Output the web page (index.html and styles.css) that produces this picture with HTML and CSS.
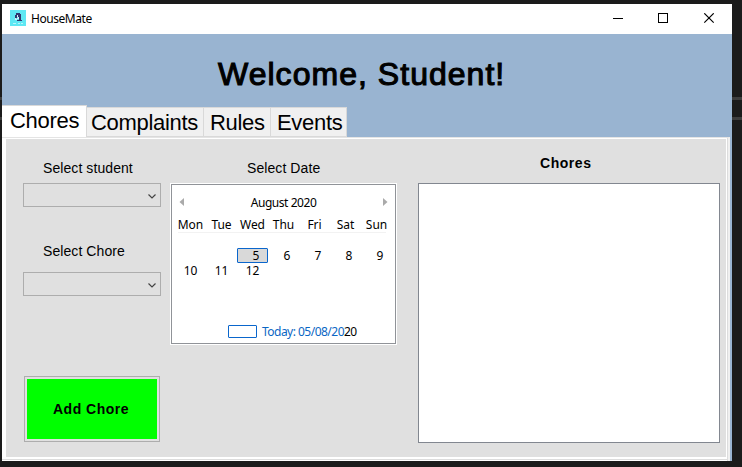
FILE: index.html
```html
<!DOCTYPE html>
<html lang="en">
<head>
<meta charset="utf-8">
<title>HouseMate</title>
<link rel="stylesheet" href="styles.css">
</head>
<body>
<div class="window">
  <header class="titlebar">
    <svg class="logo" width="16" height="16" viewBox="0 0 16 16" shape-rendering="crispEdges">
      <path fill="#5ee7f3" d="M0 0h16v16H0z"/>
      <path fill="#30366f" d="M6 3h4v1h1v6h1v1H7v-1h2V8H8V6H7v2H5V5h1z"/>
      <path fill="#d8edf8" d="M7 5h1v2h1v2H7V8h1zM5 8h1v1h1v1H5z"/>
      <path fill="#b9f6fa" d="M3 13h3v1H3zM8 13h2v1H8zM11 13h2v1h-2z"/>
    </svg>
    <span class="app-name">HouseMate</span>
    <svg class="controls" width="104" height="12" viewBox="0 0 104 12" fill="none" stroke="#000">
      <path d="M0 5.500h10M45.500.500h9v9h-9z" shape-rendering="crispEdges"/>
      <path d="M91.300.300l9.400 9.400M100.700.300l-9.400 9.400" stroke-width="1.150"/>
    </svg>
  </header>
  <section class="banner">
    <h1>Welcome, Student!</h1>
  </section>
  <nav class="tabs">
    <div class="tab active"><span>Chores</span></div>
    <div class="tab complaints"><span>Complaints</span></div>
    <div class="tab rules"><span>Rules</span></div>
    <div class="tab events"><span>Events</span></div>
  </nav>
  <div class="frame">
    <main class="panel">
      <section class="form">
        <label class="student-label">Select student</label>
        <div class="combo"><svg width="8" height="5" viewBox="0 0 8 5"><path d="M.5.500L4 4 7.500.500"/></svg></div>
        <label class="chore-label">Select Chore</label>
        <div class="combo"><svg width="8" height="5" viewBox="0 0 8 5"><path d="M.5.500L4 4 7.500.500"/></svg></div>
        <button class="add"><span>Add Chore</span></button>
      </section>
      <section class="date">
        <label class="date-label">Select Date</label>
        <div class="calendar">
          <div class="month">
            <svg width="5" height="8" viewBox="0 0 5 8"><path d="M5 0v8L.5 4z"/></svg>
            <span>August 2020</span>
            <svg width="5" height="8" viewBox="0 0 5 8"><path d="M0 0v8l4.500-4z"/></svg>
          </div>
          <div class="weekdays"><span>Mon</span><span>Tue</span><span>Wed</span><span>Thu</span><span>Fri</span><span>Sat</span><span>Sun</span></div>
          <div class="days">
            <span></span><span></span><span class="selected">5</span><span>6</span><span>7</span><span>8</span><span>9</span>
            <span>10</span><span>11</span><span>12</span>
          </div>
          <div class="today"><i></i><span>Today: 05/08/20<b>20</b></span></div>
        </div>
      </section>
      <section class="list">
        <h2>Chores</h2>
        <div class="listbox"></div>
      </section>
    </main>
  </div>
</div>
</body>
</html>
```
FILE: styles.css
```css
* { box-sizing: border-box; }
body {
  margin: 0;
  width: 742px;
  height: 467px;
  padding: 4px 10px 6px 2px;
  overflow: hidden;
  color: #000;
  font-family: "Liberation Sans", sans-serif;
  background:
    linear-gradient(#3d3d3d, #3d3d3d) 0 97px / 100% 3px no-repeat,
    linear-gradient(#3d3d3d, #3d3d3d) 0 117px / 100% 3px no-repeat,
    #1b1b1b;
}
.window { width: 730px; height: 457px; background: #99b4d1; }
.titlebar {
  display: flex;
  align-items: center;
  height: 30px;
  padding: 0 15px 0 8px;
  background: #fff;
}
.logo { margin-bottom: 2px; }
.app-name {
  margin-left: 5px;
  font: 12px/16px "Noto Sans", sans-serif;
  letter-spacing: -0.45px;
}
.controls { margin-left: auto; }
.banner { height: 71px; padding: 21px 0 0 216px; }
h1 {
  margin: 0;
  font-size: 32px;
  line-height: 38px;
  font-weight: normal;
  letter-spacing: 1.03px;
  -webkit-text-stroke: 1.1px #000;
  white-space: nowrap;
}
.tabs { display: flex; align-items: flex-end; height: 32px; }
.tab {
  height: 30px;
  border: 1px solid #d9d9d9;
  border-left: 0;
  background: #f0f0f0;
  font-size: 22px;
  line-height: 30px;
  letter-spacing: -0.3px;
  white-space: nowrap;
}
.tab.active {
  width: 85px;
  height: 32px;
  padding-left: 8px;
  border-bottom: 0;
  background: #fff;
}
.complaints { width: 117px; padding-left: 4px; }
.rules { width: 67px; padding-left: 6px; }
.events { width: 76px; padding-left: 6px; }
.frame {
  width: 728px;
  height: 324px;
  padding: 1px 3px 3px 4px;
  background: linear-gradient(#dcdcdc, #dcdcdc) 725px 0 / 1px 323px no-repeat,
    linear-gradient(#dcdcdc, #dcdcdc) 0 321px / 726px 1px no-repeat, #fff;
  border-right: 2px solid #f0f0f0;
  border-top: 1px solid #e4e4e4;
}
.panel {
  display: flex;
  width: 720px;
  height: 318px;
  background: #e0e0e0;
}
.form { width: 164px; padding: 21px 0 0 17px; }
label {
  display: block;
  font-size: 14px;
  line-height: 16px;
  letter-spacing: 0.08px;
  white-space: nowrap;
}
.form label { margin-left: 20px; }
.combo {
  display: flex;
  align-items: center;
  justify-content: flex-end;
  width: 138px;
  height: 24px;
  padding: 2px 4px 0 0;
  border: 1px solid #adadad;
}
.combo svg { fill: none; stroke: #444; stroke-width: 1.2; }
.student-label { margin-bottom: 7px; }
.chore-label { margin-top: 36px; margin-bottom: 13px; }
.add {
  display: block;
  width: 136px;
  height: 66px;
  margin: 80px 0 0 1px;
  padding: 2px;
  border: 1px solid #adadad;
  background: #0f0 content-box;
  color: #000;
  font: bold 14px/60px "Liberation Sans", sans-serif;
  letter-spacing: 0.5px;
  text-align: center;
}
.add span { margin-right: 2px; }
.date { width: 227px; padding-top: 21px; }
.date-label { margin: 0 0 7px 77px; }
.calendar {
  width: 227px;
  height: 162px;
  padding: 11px 4px 0;
  background: #fff;
  border: 1px solid #fff;
  outline: 1px solid #909398;
  outline-offset: -2px;
  font: 12px/15px "Noto Sans", sans-serif;
}
.month { display: flex; justify-content: space-between; align-items: center; padding: 0 4px; }
.month svg { fill: #aaa; margin-bottom: 2px; }
.month span { letter-spacing: -0.45px; }
.weekdays {
  display: grid;
  grid-template-columns: repeat(7, 31px);
  width: 217px;
  height: 16px;
  margin-top: 7px;
  text-align: center;
  letter-spacing: -0.05px;
  background: linear-gradient(#f2f2f2, #f2f2f2) 3px 15px / 208px 1px no-repeat;
}
.days {
  display: grid;
  grid-template-columns: repeat(7, 31px);
  grid-auto-rows: 15px;
  margin-top: 15px;
  text-align: right;
  letter-spacing: -0.3px;
}
.days span { padding-right: 9px; }
.days .selected {
  padding-right: 8px;
  border: 1px solid #0a66cc;
  border-radius: 1px;
  background: #d9d9d9;
  line-height: 13px;
}
.today {
  display: flex;
  align-items: center;
  margin: 46px 0 0 53px;
  color: #0a66c4;
  letter-spacing: -0.52px;
  white-space: nowrap;
}
.today i { width: 29px; height: 13px; margin-right: 5px; border: 1px solid #0a66cc; border-radius: 1px; }
.today b { font-weight: normal; color: #000; }
.list { padding: 16px 0 0 21px; }
h2 {
  margin: 0 0 12px;
  padding-left: 122px;
  font-size: 14px;
  line-height: 16px;
  letter-spacing: 0.55px;
}
.listbox { width: 302px; height: 260px; border: 1px solid #828790; background: #fff; }
```
